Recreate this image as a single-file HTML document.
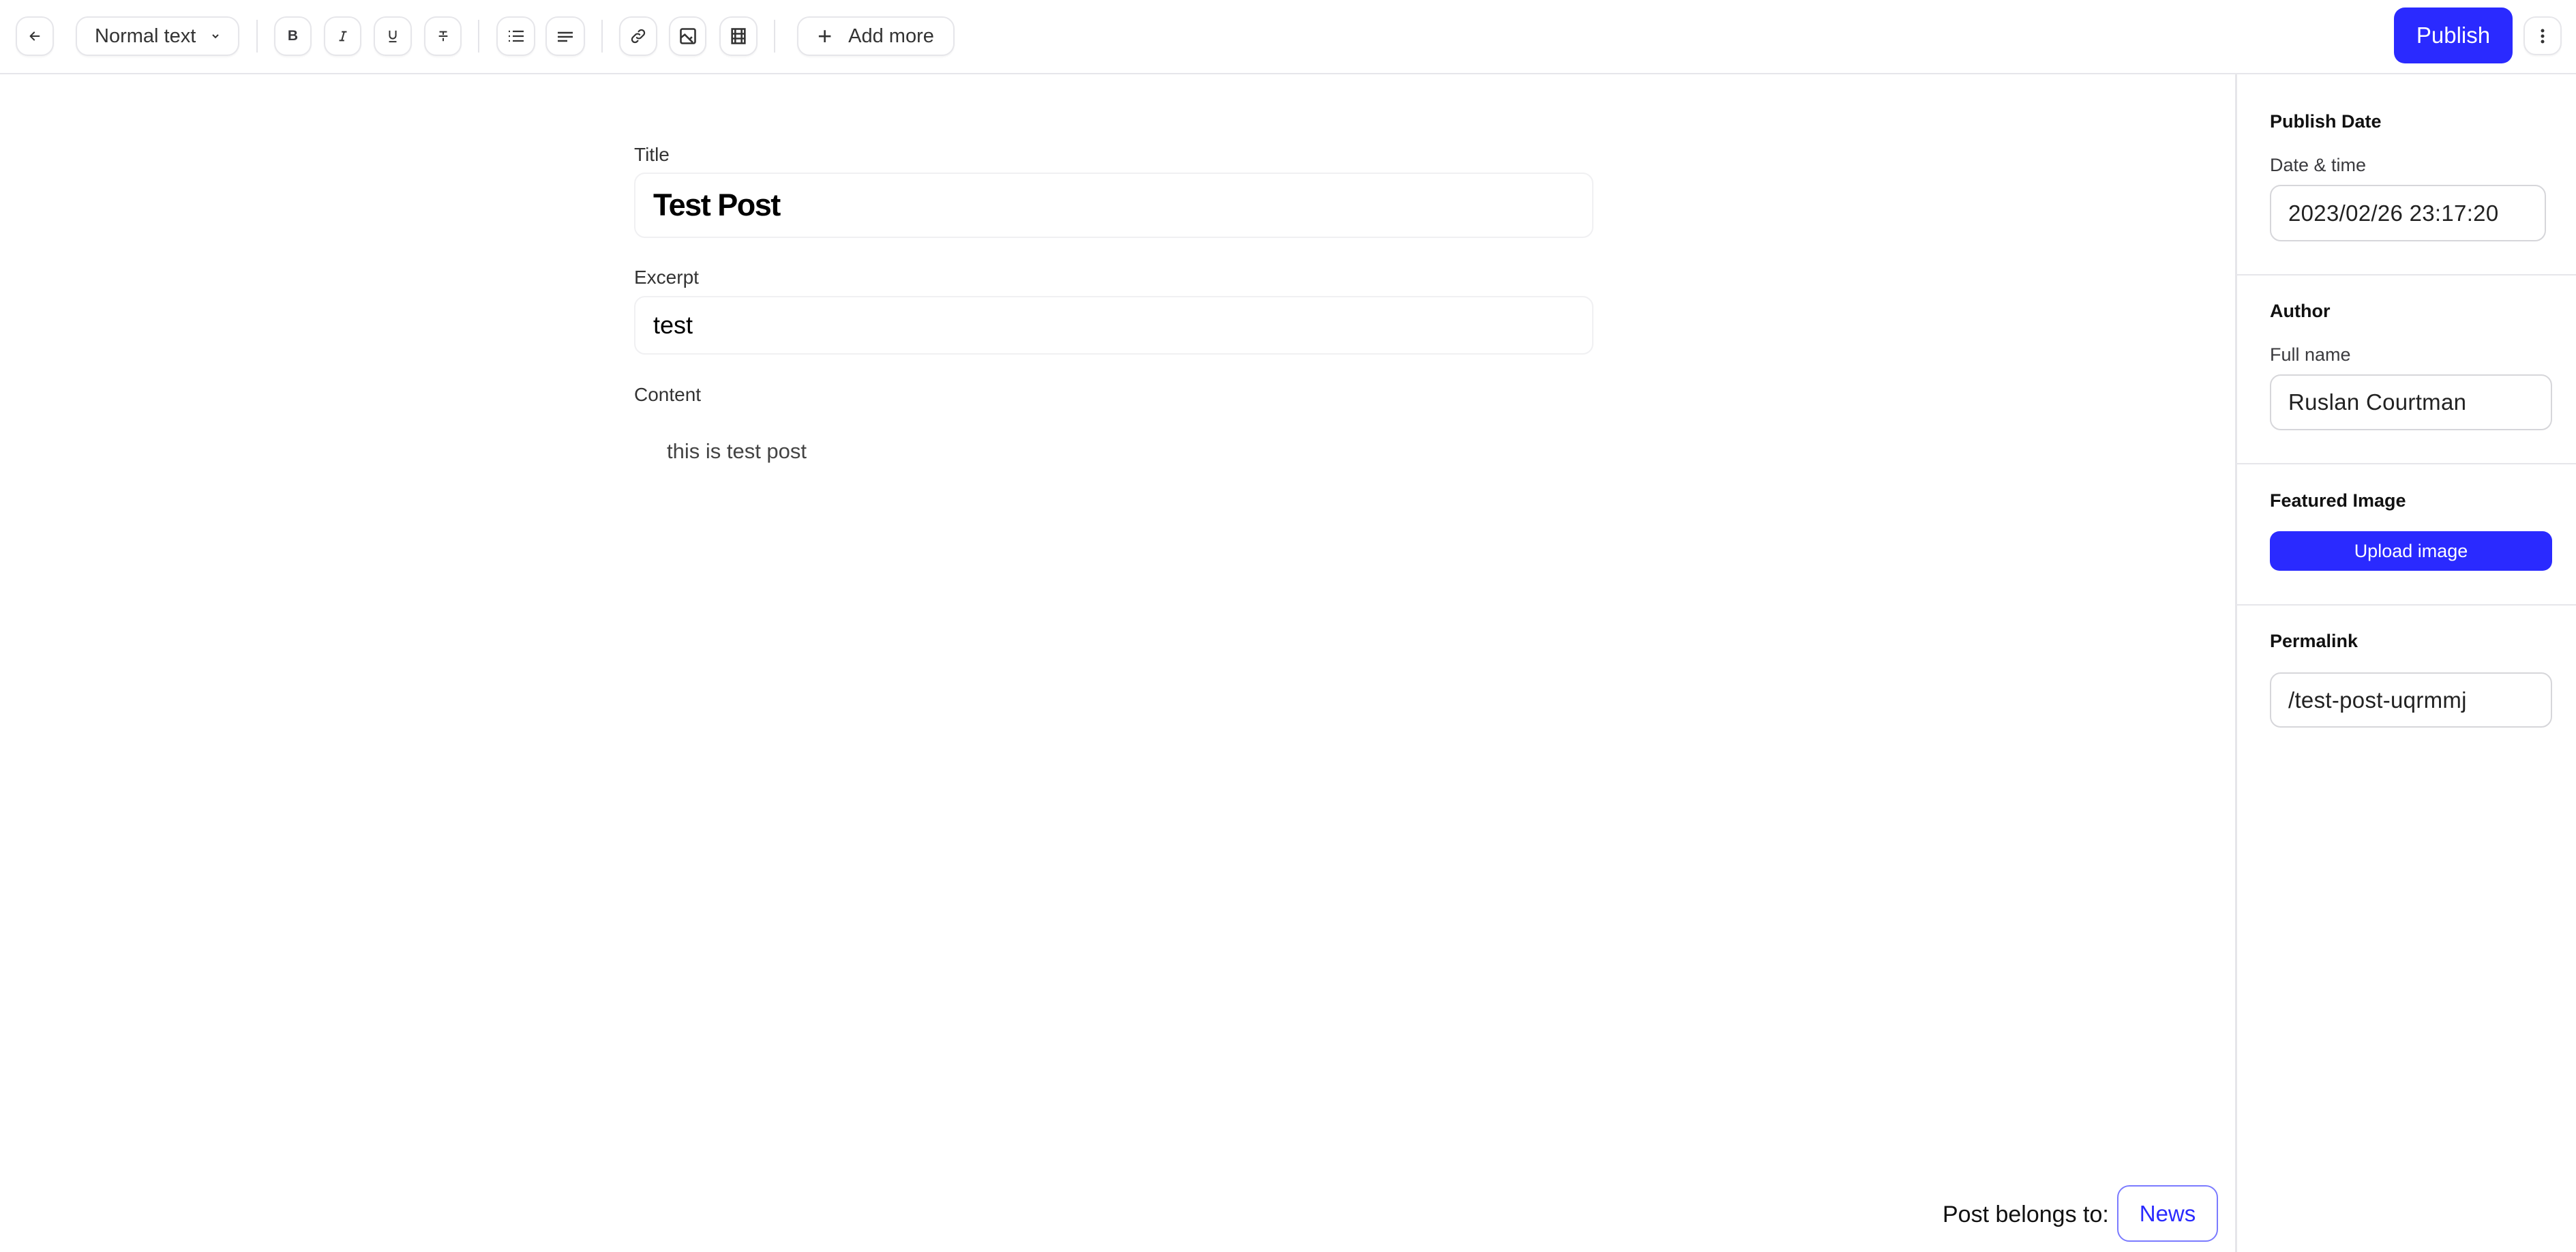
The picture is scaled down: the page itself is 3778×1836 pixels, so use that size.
<!DOCTYPE html>
<html><head><meta charset="utf-8"><style>
*{box-sizing:border-box;margin:0;padding:0}
body{width:3778px;height:1836px;background:#fff;font-family:"Liberation Sans",sans-serif;position:relative;overflow:hidden;color:#111}
.a{position:absolute}
.btn{position:absolute;top:24px;height:58px;border:2px solid #e6e6ea;border-radius:18px;background:#fff;box-shadow:0 2px 2px rgba(0,0,0,.04);display:flex;align-items:center;justify-content:center;color:#3a3a3e}
.sep{position:absolute;top:29px;width:2px;height:48px;background:#e4e4e8}
.h{position:absolute;left:3329px;font-size:27px;font-weight:bold;color:#111}
.l{position:absolute;left:3329px;font-size:27px;color:#3a3a3e}
.in{position:absolute;left:3329px;border:2px solid #d6d6da;border-radius:16px;font-size:33px;color:#222;padding-left:25px;display:flex;align-items:center;letter-spacing:.3px}
.div{position:absolute;left:3280px;width:498px;height:2px;background:#e6e6ea}
.ml{position:absolute;left:930px;font-size:28px;color:#333}
.mi{position:absolute;left:930px;width:1407px;border:2px solid #f0f0f2;border-radius:16px;display:flex;align-items:center;padding-left:26px;color:#000}
</style></head><body>
<div class="btn" style="left:23px;width:56px"><svg width="22" height="22" viewBox="0 0 24 24" fill="none" stroke="#333" stroke-width="2.2" stroke-linecap="round" stroke-linejoin="round"><path d="M19 12H5M11 6l-6 6 6 6"/></svg></div>
<div class="btn" style="left:111px;width:240px;font-size:29px;justify-content:flex-start;padding-left:26px;color:#333">Normal text<svg style="margin-left:22px" width="14" height="10" viewBox="0 0 14 10" fill="none" stroke="#333" stroke-width="2"><path d="M3 3l4 4 4-4"/></svg></div>
<div class="sep" style="left:376px"></div>
<div class="btn" style="left:402px;width:55px;font-size:21px;font-weight:bold">B</div>
<div class="btn" style="left:475px;width:55px"><svg width="20" height="20" viewBox="0 0 22 22" fill="none" stroke="#333" stroke-width="2.2"><path d="M9 4h8M5 18h8M13 4l-4 14"/></svg></div>
<div class="btn" style="left:548px;width:56px"><svg width="20" height="22" viewBox="0 0 22 24" fill="none" stroke="#333" stroke-width="2.2"><path d="M6 3v8a5 5 0 0 0 10 0V3M5 21h12"/></svg></div>
<div class="btn" style="left:622px;width:55px"><svg width="20" height="22" viewBox="0 0 22 24" fill="none" stroke="#333" stroke-width="2.2"><path d="M5 5h12M11 5v5M4 12h14M11 15v5"/></svg></div>
<div class="sep" style="left:701px"></div>
<div class="btn" style="left:728px;width:57px"><svg width="26" height="22" viewBox="0 0 26 22" fill="none" stroke="#333" stroke-width="2.2"><path d="M8 4h16M8 11h16M8 18h16M2 4h2M2 11h2M2 18h2"/></svg></div>
<div class="btn" style="left:800px;width:58px"><svg width="26" height="22" viewBox="0 0 26 22" fill="none" stroke="#333" stroke-width="2.4"><path d="M2 6h22M2 12h22M2 18h14"/></svg></div>
<div class="sep" style="left:882px"></div>
<div class="btn" style="left:908px;width:56px"><svg width="26" height="26" viewBox="0 0 24 24" fill="none" stroke="#333" stroke-width="2" stroke-linecap="round"><path d="M10 14a4 4 0 0 0 5.7 0l3.5-3.5a4 4 0 0 0-5.7-5.7l-1 1M14 10a4 4 0 0 0-5.7 0l-3.5 3.5a4 4 0 0 0 5.7 5.7l1-1"/></svg></div>
<div class="btn" style="left:981px;width:55px"><svg width="28" height="28" viewBox="0 0 24 24" fill="none" stroke="#333" stroke-width="2.2"><rect x="3" y="3" width="18" height="18" rx="2"/><path d="M3 14l5-4 10 10M14 16l3-3"/></svg></div>
<div class="btn" style="left:1055px;width:56px"><svg width="28" height="28" viewBox="0 0 24 24" fill="none" stroke="#333" stroke-width="2.2"><rect x="4" y="3" width="16" height="18"/><path d="M8 3v18M16 3v18M4 9h16M4 15h16"/></svg></div>
<div class="sep" style="left:1135px"></div>
<div class="btn" style="left:1169px;width:231px;font-size:29px;color:#333"><span style="font-size:36px;margin-right:24px;font-weight:300">+</span>Add more</div>
<div class="a" style="left:3511px;top:11px;width:174px;height:82px;background:#2a2aff;border-radius:16px;color:#fff;font-size:33px;display:flex;align-items:center;justify-content:center">Publish</div>
<div class="btn" style="left:3701px;top:24px;width:56px;height:57px"><svg width="8" height="24" viewBox="0 0 8 24" fill="#333"><circle cx="4" cy="4" r="2.5"/><circle cx="4" cy="12" r="2.5"/><circle cx="4" cy="20" r="2.5"/></svg></div>
<div class="a" style="left:0;top:107px;width:3778px;height:2px;background:#e6e6ea"></div>
<div class="a" style="left:3278px;top:109px;width:3px;height:1727px;background:#e6e6ea"></div>

<div class="ml" style="top:211px">Title</div>
<div class="mi" style="top:253px;height:96px;font-size:45px;font-weight:bold;letter-spacing:-1.5px">Test Post</div>
<div class="ml" style="top:391px">Excerpt</div>
<div class="mi" style="top:434px;height:86px;font-size:36px">test</div>
<div class="ml" style="top:563px">Content</div>
<div class="a" style="left:978px;top:644px;font-size:31px;color:#444">this is test post</div>

<div class="h" style="top:163px">Publish Date</div>
<div class="l" style="top:227px">Date &amp; time</div>
<div class="in" style="top:271px;width:405px;height:83px">2023/02/26 23:17:20</div>
<div class="div" style="top:402px"></div>
<div class="h" style="top:441px">Author</div>
<div class="l" style="top:505px">Full name</div>
<div class="in" style="top:549px;width:414px;height:82px">Ruslan Courtman</div>
<div class="div" style="top:679px"></div>
<div class="h" style="top:719px">Featured Image</div>
<div class="a" style="left:3329px;top:779px;width:414px;height:58px;background:#2a2aff;border-radius:14px;color:#fff;font-size:27px;display:flex;align-items:center;justify-content:center">Upload image</div>
<div class="div" style="top:886px"></div>
<div class="h" style="top:925px">Permalink</div>
<div class="in" style="top:986px;width:414px;height:81px">/test-post-uqrmmj</div>

<div class="a" style="left:2849px;top:1762px;font-size:34px;color:#111">Post belongs to:</div>
<div class="a" style="left:3105px;top:1738px;width:148px;height:83px;border:2px solid #7b7bff;border-radius:18px;color:#2a2aff;font-size:33px;display:flex;align-items:center;justify-content:center">News</div>
</body></html>
